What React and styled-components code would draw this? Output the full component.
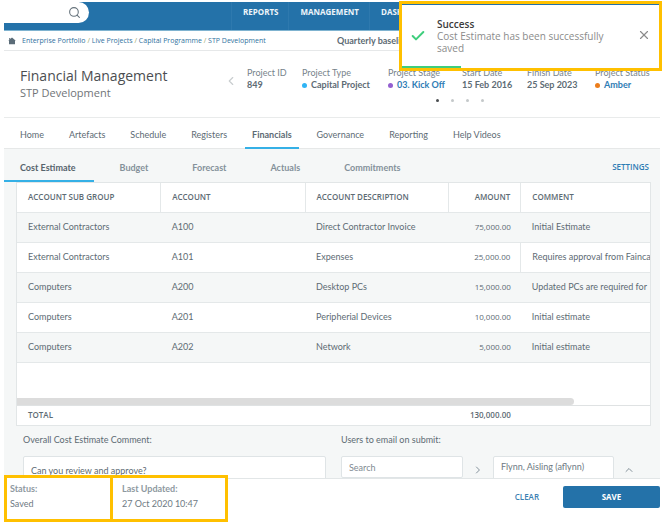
import React, { useState } from "react";

import styled, { createGlobalStyle } from "styled-components";
import { Check, ChevronLeft, ChevronRight, ChevronUp, Search, X } from "lucide-react";

const GlobalStyle = createGlobalStyle`
  * {
    box-sizing: border-box;
  }

  body {
    margin: 0;
    background: #fff;
    color: #5d6b74;
    font-family: Lato, "Open Sans", sans-serif;
    font-size: 9px;
    line-height: 12px;
  }

  button,
  input,
  textarea {
    font: inherit;
    color: inherit;
  }

  button {
    border: 0;
    padding: 0;
    background: none;
    cursor: pointer;
  }

  a {
    color: inherit;
    text-decoration: none;
  }
`;

const Page = styled.div`
  display: flex;
  flex-direction: column;
  height: 100vh;
  padding: 2px 5px 0 4px;
  overflow: hidden;
`;

const TopBar = styled.header`
  display: flex;
  flex: none;
  height: 29px;
  background: #2472a9;
  border-bottom: 1px solid #7fb3d0;
`;

const SearchBox = styled.label`
  display: flex;
  align-items: center;
  width: 85px;
  height: 21px;
  padding-right: 8px;
  background: #fff;
  border-radius: 0 11px 11px 0;
  color: #66737c;

  input {
    flex: 1;
    min-width: 0;
    border: 0;
    outline: 0;
    background: none;
  }
`;

const MainNav = styled.nav`
  display: flex;
  margin-left: 142px;
  height: 28px;

  a {
    padding: 4px 10px 0 11px;
    border-left: 1px solid #2e79ae;
    color: #eef5fa;
    font-family: "Open Sans", sans-serif;
    font-size: 8px;
    font-weight: 700;
  }
`;

const SubBar = styled.div`
  display: flex;
  flex: none;
  align-items: center;
  height: 20px;
  padding-left: 4px;
  border-bottom: 1px solid #e6e8e9;
`;

const Crumbs = styled.nav`
  display: flex;
  align-items: center;
  width: 329px;
  font-family: "Open Sans", sans-serif;
  font-size: 7px;
  color: #2f719e;
  white-space: pre;

  svg {
    margin-right: 6px;
  }

  span {
    color: #9aa86a;
  }
`;

const Notice = styled.div`
  font-weight: 700;
`;

const TitleBar = styled.section`
  display: flex;
  flex: none;
  justify-content: space-between;
  height: 67px;
  padding: 16px 0 0 16px;
  border-bottom: 1px solid #e9ebeb;

  h1,
  h2 {
    margin: 0;
    font-family: "Open Sans", sans-serif;
    font-weight: 400;
  }

  h1 {
    color: #4b4e51;
    font-size: 14px;
    line-height: 18px;
  }

  h2 {
    color: #707478;
    font-size: 11px;
    line-height: 15px;
  }
`;

const Carousel = styled.div`
  display: flex;
  gap: 9px;
  color: #c9cdcf;

  > button {
    align-self: flex-start;
    margin-top: 7px;
  }
`;

const Facts = styled.dl`
  display: grid;
  grid-template-columns: 55px 86px 74px 65px 68px 65px;
  margin: 0;
  color: #77838b;

  dt,
  dd {
    margin: 0;
    white-space: nowrap;
  }
`;

const FactValue = styled.dd`
  display: flex;
  align-items: center;
  gap: 4px;
  color: ${({ $linked }) => ($linked ? "#2e7cb4" : "#5d6b74")};
  font-weight: 700;

  i {
    width: 5px;
    height: 5px;
    border-radius: 50%;
    background: ${({ $dot }) => $dot};
  }
`;

const Dots = styled.div`
  display: flex;
  gap: 12px;
  margin: 8px 0 0 189px;
`;

const Dot = styled.span`
  width: 3px;
  height: 3px;
  border-radius: 50%;
  background: ${({ $active }) => ($active ? "#4a4d50" : "#c4c8ca")};
`;

const Tabs = styled.nav`
  display: flex;
  flex: none;
  height: 31px;
  padding-left: 9px;
  gap: 11px;
  border-bottom: 1px solid #e6e8e8;
`;

const Tab = styled.a`
  height: 31px;
  padding: 11px 7px 0;
  border-bottom: 2px solid ${({ $active }) => ($active ? "#35b0e6" : "transparent")};
  font-weight: ${({ $active }) => ($active ? 700 : 400)};
  white-space: nowrap;
`;

const Content = styled.main`
  flex: 1;
  min-height: 0;
  overflow: hidden;
  background: #f5f7f7;
`;

const SubTabs = styled.nav`
  display: flex;
  height: 33px;
`;

const SubTab = styled.a`
  height: 33px;
  padding: 13px 22px 0;
  border-bottom: 2px solid ${({ $active }) => ($active ? "#35b0e6" : "transparent")};
  color: ${({ $active }) => ($active ? "#55636c" : "#84919a")};
  font-weight: 700;

  &:first-child {
    margin-right: 4px;
    padding: 13px 18px 0 16px;
  }
`;

const Settings = styled.button`
  align-self: flex-start;
  margin: 12px 11px 0 auto;
  color: #2e7cb4;
  font-family: "Open Sans", sans-serif;
  font-size: 8px;
  font-weight: 600;
`;

const Grid = styled.div`
  margin: 0 9px 0 12px;
  border: 1px solid #e2e6e7;
  background: #fff;

  table {
    width: 100%;
    table-layout: fixed;
    border-collapse: collapse;
  }

  th,
  td {
    height: 30px;
    padding: 0 11px;
    border-bottom: 1px solid #e4e8e9;
    text-align: left;
    white-space: nowrap;
    overflow: hidden;
  }

  th:nth-child(4),
  td:nth-child(4) {
    padding-right: 10px;
    text-align: right;
  }

  th {
    height: 29px;
    font-family: "Open Sans", sans-serif;
    font-size: 8px;
    font-weight: 600;
  }

  th + th {
    border-left: 1px solid #e4e8e9;
  }

  tbody tr:nth-child(odd) {
    background: #f5f7f7;
  }
`;

const AmountCell = styled.td`
  font-family: "Open Sans", sans-serif;
  font-size: 8px;
`;

const ScrollCell = styled.td`
  && {
    height: 43px;
    padding: 0;
    border-bottom: 1px solid #dfe2e3;
    vertical-align: bottom;
  }
`;

const TotalCell = styled.td`
  && {
    height: 20px;
    padding-right: 10px;
    border-bottom: 0;
    font-family: "Open Sans", sans-serif;
    font-size: 8px;
    font-weight: 600;
    text-align: ${({ $right }) => ($right ? "right" : "left")};
  }
`;

const CommentCell = styled.td`
  ${({ $editing }) => $editing && "border-left: 1px solid #e4e8e9;"}
`;

const ScrollThumb = styled.div`
  width: 88%;
  height: 7px;
  border-radius: 0 4px 4px 0;
  background: #dcdcdc;
`;

const Form = styled.form`
  display: grid;
  grid-template-columns: 303px 273px 1fr;
  gap: 10px 15px;
  padding: 8px 9px 0 19px;
`;

const Users = styled.div`
  display: flex;
  align-items: flex-start;
  color: #84919a;

  input {
    width: 122px;
    height: 22px;
  }

  ul {
    width: 122px;
    height: 60px;
    margin: 0;
    padding: 4px 7px;
    list-style: none;
    background: #fff;
    border: 1px solid #dfe4e6;
    border-radius: 2px;
    color: #6e7a83;
    white-space: nowrap;
  }

  svg {
    margin: 8px 9px 0;
  }
`;

const Caret = styled.button`
  align-self: start;
  justify-self: start;
  margin-left: -6px;
  color: #84919a;

  svg {
    display: block;
    margin-top: 8px;
  }
`;

const Field = styled.input`
  padding: 0 7px;
  border: 1px solid #dfe4e6;
  border-radius: 2px;
  background: #fff;

  &::placeholder {
    color: #7f8a92;
    opacity: 1;
  }
`;

const CommentBox = styled(Field)`
  height: 60px;
  padding: 8px 7px;
  resize: none;
  outline: 0;
`;

const Footer = styled.footer`
  display: flex;
  flex: none;
  align-items: flex-start;
  height: 46px;
  border-top: 1px solid #e2e6e7;
`;

const Outlined = styled.dl`
  position: relative;
  width: ${({ $wide }) => ($wide ? 118 : 109)}px;
  height: 47px;
  margin: -4px 0 0 ${({ $wide }) => ($wide ? -3 : 0)}px;
  padding: 5px ${({ $wide }) => ($wide ? 9 : 3)}px;
  border: 3px solid #ffc000;
  background: #fff;

  dt {
    color: #8e999f;
    font-weight: 700;
  }

  dd {
    margin: 3px 0 0;
    color: #6e7a83;
  }
`;

const Actions = styled.div`
  display: flex;
  margin: 7px 0 0 auto;
  gap: 24px;
`;

const TextButton = styled.button`
  color: #3c81b2;
  font-family: "Open Sans", sans-serif;
  font-size: 8px;
  font-weight: 600;
`;

const SaveButton = styled(TextButton)`
  width: 97px;
  height: 22px;
  border-radius: 2px;
  background: #2472a9;
  color: #fff;
  font-weight: 700;
`;

const Toast = styled.div`
  position: fixed;
  top: 1px;
  right: 3px;
  display: flex;
  align-items: center;
  width: 263px;
  height: 70px;
  padding: 0 8px 0 8px;
  border: 3px solid #ffc000;
  background: #fff;
  box-shadow: inset 0 1px #2472a9;
  color: #8b8b8b;
  font-family: "Open Sans", sans-serif;
  font-size: 10px;

  p {
    flex: 1;
    margin: 0 20px 0 11px;
  }

  strong {
    display: block;
    color: #3c3c3c;
    font-weight: 600;
  }

  progress {
    position: absolute;
    left: 0;
    bottom: 0;
    width: 100%;
    height: 2px;
    border: 0;
    appearance: none;
  }

  progress::-webkit-progress-bar {
    background: transparent;
  }

  progress::-webkit-progress-value {
    background: #3fce7d;
  }
`;

const crumbs = ["Enterprise Portfolio", "Live Projects", "Capital Programme", "STP Development"];

const facts = [
  { label: "Project ID", value: "849" },
  { label: "Project Type", value: "Capital Project", dot: "#2fb4f5" },
  { label: "Project Stage", value: "03. Kick Off", dot: "#9460d0", linked: true },
  { label: "Start Date", value: "15 Feb 2016" },
  { label: "Finish Date", value: "25 Sep 2023" },
  { label: "Project Status", value: "Amber", dot: "#ec7d1b", linked: true },
];

const tabs = ["Home", "Artefacts", "Schedule", "Registers", "Financials", "Governance", "Reporting", "Help Videos"];
const subTabs = ["Cost Estimate", "Budget", "Forecast", "Actuals", "Commitments"];

const rows = [
  ["External Contractors", "A100", "Direct Contractor Invoice", "75,000.00", "Initial Estimate"],
  ["External Contractors", "A101", "Expenses", "25,000.00", "Requires approval from Faincance"],
  ["Computers", "A200", "Desktop PCs", "15,000.00", "Updated PCs are required for"],
  ["Computers", "A201", "Peripherial Devices", "10,000.00", "Initial estimate"],
  ["Computers", "A202", "Network", "5,000.00", "Initial estimate"],
];

const HomeIcon = () => (
  <svg width="8" height="8" viewBox="0 0 8 8" fill="#5b6c78" aria-hidden="true">
    <path d="M4 0.5 7.8 3.8H7V7.3H1V3.8H0.2L1.2 2.9V1H2.2V2Z" />
  </svg>
);

const CostTable = () => (
  <Grid>
    <table>
      <colgroup>
        <col width="22.7%" />
        <col width="22.8%" />
        <col width="22.7%" />
        <col width="11.4%" />
        <col />
      </colgroup>
      <thead>
        <tr>
          <th>ACCOUNT SUB GROUP</th>
          <th>ACCOUNT</th>
          <th>ACCOUNT DESCRIPTION</th>
          <th>AMOUNT</th>
          <th>COMMENT</th>
        </tr>
      </thead>
      <tbody>
        {rows.map(([group, account, description, amount, comment], index) => (
          <tr key={account}>
            <td>{group}</td>
            <td>{account}</td>
            <td>{description}</td>
            <AmountCell>{amount}</AmountCell>
            <CommentCell $editing={index === 1}>{comment}</CommentCell>
          </tr>
        ))}
      </tbody>
      <tfoot>
        <tr>
          <ScrollCell colSpan="5">
            <ScrollThumb />
          </ScrollCell>
        </tr>
        <tr>
          <TotalCell colSpan="3">TOTAL</TotalCell>
          <TotalCell $right>130,000.00</TotalCell>
          <TotalCell />
        </tr>
      </tfoot>
    </table>
  </Grid>
);

const App = () => {
  const [comment, setComment] = useState("Can you review and approve?");
  const [showToast, setShowToast] = useState(true);

  return (
    <Page>
      <GlobalStyle />
      <TopBar>
        <SearchBox>
          <input type="search" aria-label="Search projects" />
          <Search size={13} strokeWidth={2} />
        </SearchBox>
        <MainNav>
          <a href="#reports">REPORTS</a>
          <a href="#management">MANAGEMENT</a>
          <a href="#dashboards">DASH</a>
        </MainNav>
      </TopBar>
      <SubBar>
        <Crumbs>
          <HomeIcon />
          {crumbs.map((crumb, index) => (
            <React.Fragment key={crumb}>
              {index > 0 && <span> / </span>}
              <a href="#crumb">{crumb}</a>
            </React.Fragment>
          ))}
        </Crumbs>
        <Notice>Quarterly baseline</Notice>
      </SubBar>
      <TitleBar>
        <div>
          <h1>Financial Management</h1>
          <h2>STP Development</h2>
        </div>
        <Carousel>
          <button type="button" aria-label="Previous">
            <ChevronLeft size={14} strokeWidth={2} />
          </button>
          <div>
            <Facts>
              {facts.map((fact) => (
                <div key={fact.label}>
                  <dt>{fact.label}</dt>
                  <FactValue $dot={fact.dot} $linked={fact.linked}>
                    {fact.dot && <i />}
                    {fact.linked ? <a href="#fact">{fact.value}</a> : fact.value}
                  </FactValue>
                </div>
              ))}
            </Facts>
            <Dots>
              <Dot $active />
              <Dot />
              <Dot />
              <Dot />
            </Dots>
          </div>
        </Carousel>
      </TitleBar>
      <Tabs>
        {tabs.map((tab) => (
          <Tab key={tab} href="#tab" $active={tab === "Financials"}>
            {tab}
          </Tab>
        ))}
      </Tabs>
      <Content>
        <SubTabs>
          {subTabs.map((tab) => (
            <SubTab key={tab} href="#subtab" $active={tab === "Cost Estimate"}>
              {tab}
            </SubTab>
          ))}
          <Settings type="button">SETTINGS</Settings>
        </SubTabs>
        <CostTable />
        <Form id="estimate" onSubmit={(event) => event.preventDefault()}>
          <label htmlFor="comment">Overall Cost Estimate Comment:</label>
          <label htmlFor="users">Users to email on submit:</label>
          <span />
          <CommentBox
            as="textarea"
            id="comment"
            value={comment}
            onChange={(event) => setComment(event.target.value)}
          />
          <Users>
            <Field id="users" type="text" placeholder="Search" />
            <ChevronRight size={12} />
            <ul>
              <li>Flynn, Aisling (aflynn)</li>
            </ul>
          </Users>
          <Caret type="button" aria-label="Move up">
            <ChevronUp size={12} />
          </Caret>
        </Form>
      </Content>
      <Footer>
        <Outlined>
          <dt>Status:</dt>
          <dd>Saved</dd>
        </Outlined>
        <Outlined $wide>
          <dt>Last Updated:</dt>
          <dd>27 Oct 2020 10:47</dd>
        </Outlined>
        <Actions>
          <TextButton type="button" onClick={() => setComment("")}>
            CLEAR
          </TextButton>
          <SaveButton type="submit" form="estimate">
            SAVE
          </SaveButton>
        </Actions>
      </Footer>
      {showToast && (
        <Toast role="status">
          <Check size={16} strokeWidth={3} color="#3fce7d" />
          <p>
            <strong>Success</strong>
            Cost Estimate has been successfully saved
          </p>
          <button type="button" aria-label="Close" onClick={() => setShowToast(false)}>
            <X size={14} />
          </button>
          <progress value="23" max="100" />
        </Toast>
      )}
    </Page>
  );
};

export default App;
